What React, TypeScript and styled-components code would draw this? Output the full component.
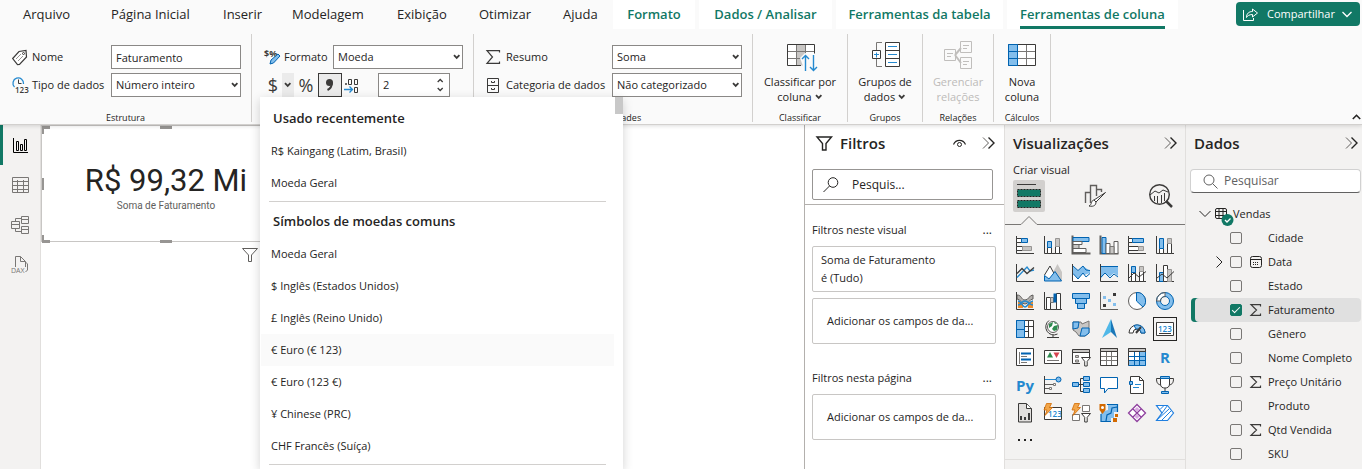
import React from 'react';
import styled, { createGlobalStyle, css } from 'styled-components';

const green = '#117865';
const ink = '#252423';
const dark = '#3b3a39';
const blue = '#0063b1';
const sky = '#83beec';
const mid = '#2489cf';
const gray = '#c8c6c4';
const steel = '#797775';

const GlobalStyle = createGlobalStyle`
  *, *::before, *::after { box-sizing: border-box; }
  body { margin: 0; background: #fff; }
  body, button, input, select {
    font-family: "Open Sans", "Noto Sans", sans-serif;
    font-size: 11px;
    line-height: 16px;
    color: ${ink};
  }
  button { border: 0; padding: 0; background: none; cursor: pointer; }
  h1, h2, h3, p, ul { margin: 0; padding: 0; list-style: none; }
  svg { display: block; flex: none; overflow: visible; }
`;

/* ---------- shared pieces ---------- */

const Svg = ({ w = 18, h = w, children, ...rest }: { w?: number; h?: number; children: React.ReactNode } & React.SVGProps<SVGSVGElement>) => (
  <svg width={w} height={h} viewBox={`0 0 ${w} ${h}`} fill="none" aria-hidden="true" {...rest}>
    {children}
  </svg>
);

const SmallChevron = () => (
  <Svg w={8} h={6}><path d="M1 1.2l2.7 2.7 2.7-2.7" stroke={dark} strokeWidth="1.8" /></Svg>
);

const DoubleChevron = () => (
  <Svg w={13} h={12}>
    <path d="M1 .5l5.5 5.5L1 11.500" stroke="#605e5c" />
    <path d="M6.500 .5l5.500 5.500-5.500 5.500" stroke={ink} strokeWidth="1.4" />
  </Svg>
);

const Sigma = ({ size = 12, h = 13 }: { size?: number; h?: number }) => (
  <Svg w={size} h={h}>
    <path d={`M${size - 0.5} 2.500V.6H1l5.500 ${h / 2 - 0.6}L1 ${h - 0.6}h${size - 1.5}v-2`} stroke={dark} strokeWidth="1.2" />
  </Svg>
);

/* ---------- page frame ---------- */

const Page = styled.div`
  display: flex;
  flex-direction: column;
  height: 100vh;
  overflow: hidden;
`;

const Ribbon = styled.header`
  position: relative;
  z-index: 2;
  background: #fafafa;
  border-bottom: 1px solid #d2d0ce;
  box-shadow: 0 1px 4px rgba(0, 0, 0, 0.14);
`;

const TabBar = styled.nav`
  display: flex;
  height: 29px;
  padding-left: 23px;
`;

const Tab = styled.a<{ $width: number }>`
  flex: 0 0 ${(p) => p.$width}px;
  font-size: 13px;
  line-height: 29px;
  color: ${ink};
  text-decoration: none;
  white-space: nowrap;
`;

const ContextTabs = styled.div`
  display: flex;
  gap: 4px;
`;

const ContextTab = styled.a<{ $width: number; $active?: boolean }>`
  display: flex;
  flex: 0 0 ${(p) => p.$width}px;
  justify-content: center;
  background: #fff;
  color: ${green};
  font-size: 13px;
  font-weight: 600;
  line-height: 29px;
  text-decoration: none;
  white-space: nowrap;
  span { border-bottom: ${(p) => (p.$active ? `3px solid ${green}` : '0')}; height: 29px; }
`;

const ShareButton = styled.button`
  display: flex;
  align-items: center;
  flex: none;
  width: 124px;
  height: 24px;
  margin: 2px 2px 0 auto;
  padding: 0 8px 0 7px;
  gap: 9px;
  border-radius: 4px;
  background: ${green};
  color: #fff;
  span { flex: 1; min-width: 0; white-space: nowrap; }
`;

const Groups = styled.div`
  display: flex;
  padding: 5px 0 2px;
`;

const Group = styled.section<{ $width: number }>`
  position: relative;
  display: flex;
  flex: 0 0 ${(p) => p.$width}px;
  flex-direction: column;
  min-width: 0;
  height: 88px;
  border-right: 1px solid #d2d0ce;
`;

const GroupTitle = styled.h2`
  margin-top: auto;
  font-size: 9px;
  font-weight: 400;
  line-height: 8px;
  text-align: center;
`;

const Rows = styled.div`
  display: flex;
  flex-direction: column;
  gap: 4px;
  padding: 11px 10px 0 12px;
`;

const Row = styled.div`
  display: flex;
  align-items: center;
  height: 24px;
`;

const FieldIcon = styled.span<{ $width: number }>`
  flex: 0 0 ${(p) => p.$width}px;
`;

const FieldLabel = styled.label`
  flex: 1;
  min-width: 0;
  white-space: nowrap;
`;

const box = css`
  width: 100%;
  height: 24px;
  padding: 0 4px;
  border: 1px solid #8a8886;
  border-radius: 0;
  background: #fff;
  appearance: none;
`;

const TextField = styled.input`
  ${box}
  flex: none;
  width: 130px;
`;

const SelectBox = styled.span`
  display: grid;
  flex: 0 0 130px;
  align-items: center;
  > * { grid-area: 1 / 1; }
  > svg { justify-self: end; margin-right: 2px; pointer-events: none; }
`;

const NativeSelect = styled.select`${box}`;

const NumberBox = styled.span`
  display: flex;
  width: 72px;
  height: 24px;
  margin-left: 18px;
  border: 1px solid #8a8886;
  background: #fff;
  input { flex: 1; min-width: 0; padding: 0 4px; border: 0; background: none; }
`;

const Steppers = styled.span`
  display: flex;
  flex-direction: column;
  justify-content: space-evenly;
  width: 12px;
`;

const IconButton = styled.button<{ $width: number; $tone?: 'pressed' | 'shaded' }>`
  display: grid;
  place-items: center;
  flex: 0 0 ${(p) => p.$width}px;
  height: 24px;
  color: ${dark};
  font-size: 18px;
  line-height: 24px;
  background: ${(p) => (p.$tone ? '#ebebeb' : 'none')};
  border: ${(p) => (p.$tone === 'pressed' ? `1px solid ${dark}` : '0')};
`;

const BigButton = styled.button`
  display: flex;
  flex-direction: column;
  align-items: center;
  gap: 2px;
  padding-top: 6px;
  line-height: 15px;
  white-space: nowrap;
  &:disabled { color: #bdbbb9; cursor: default; }
  span { display: flex; align-items: center; justify-content: center; gap: 3px; }
`;

const Collapse = styled.button`
  align-self: flex-end;
  margin: 0 1px 2px auto;
`;

/* ---------- currency menu ---------- */

const Menu = styled.div`
  position: absolute;
  top: 63px;
  left: 8px;
  z-index: 5;
  width: 363px;
  height: calc(100vh - 97px);
  padding: 2px 9px 0 0;
  overflow: hidden;
  background: #fff;
  box-shadow: 0 3px 10px rgba(0, 0, 0, 0.18);
`;

const Thumb = styled.span`
  position: absolute;
  top: 0;
  right: 0;
  width: 8px;
  height: 17px;
  background: #c8c8c8;
`;

const MenuSection = styled.section`
  margin-left: 1px;
`;

const MenuTitle = styled.h3`
  padding: 2px 12px 0;
  font-size: 13px;
  font-weight: 600;
  line-height: 34px;
`;

const MenuItem = styled.button<{ $hover?: boolean }>`
  display: block;
  width: 100%;
  height: 32px;
  padding: 0 10px;
  text-align: left;
  background: ${(p) => (p.$hover ? '#fafafa' : 'none')};
`;

const MenuRule = styled.hr`
  height: 1px;
  margin: 2px 8px 0;
  border: 0;
  background: #d2d0ce;
`;

/* ---------- workspace ---------- */

const Workspace = styled.main`
  display: flex;
  flex: 1;
  min-height: 0;
`;

const Rail = styled.nav`
  display: flex;
  flex: 0 0 41px;
  flex-direction: column;
  background: #f3f2f1;
  border-right: 1px solid #e1dfdd;
`;

const RailButton = styled.button<{ $active?: boolean }>`
  display: grid;
  place-items: center;
  height: 40px;
  padding-right: 3px;
  border-left: 3px solid ${(p) => (p.$active ? green : 'transparent')};
`;

const Canvas = styled.section`
  flex: 1;
  min-width: 0;
  background: #fff;
`;

const CardVisual = styled.article`
  position: relative;
  display: flex;
  flex-direction: column;
  align-items: center;
  width: 250px;
  height: 117px;
  padding-top: 36px;
  border: 1px solid #c8c6c4;
`;

const Handle = styled.span<{ $x: 'start' | 'mid'; $y: 'top' | 'mid' | 'bottom' }>`
  position: absolute;
  ${(p) => (p.$x === 'start' ? 'left: 0;' : 'left: calc(50% - 6px);')}
  ${(p) => (p.$y === 'top' ? 'top: 0;' : p.$y === 'bottom' ? 'bottom: -2px;' : 'top: calc(50% - 6px);')}
  width: ${(p) => (p.$y === 'mid' ? 2 : p.$x === 'mid' ? 12 : 8)}px;
  height: ${(p) => (p.$y === 'mid' ? 12 : p.$x === 'mid' ? 3 : 8)}px;
  ${(p) =>
    p.$x === 'start' && p.$y !== 'mid'
      ? `border-left: 2px solid #979593; border-${p.$y}: 3px solid #979593;`
      : 'background: #979593;'}
`;

const CardValue = styled.p`
  font-family: Roboto, sans-serif;
  font-size: 31px;
  line-height: 38px;
  white-space: nowrap;
`;

const CardCaption = styled.p`
  font-family: Roboto, sans-serif;
  font-size: 10px;
  line-height: 12px;
  color: #605e5c;
`;

const VisualHeader = styled.div`
  display: flex;
  justify-content: flex-end;
  width: 250px;
  padding: 6px 33px 0 0;
`;

const Pane = styled.aside<{ $width: number; $plain?: boolean }>`
  display: flex;
  flex: 0 0 ${(p) => p.$width}px;
  flex-direction: column;
  min-width: 0;
  overflow: hidden;
  background: ${(p) => (p.$plain ? '#fff' : '#f3f2f1')};
  border-left: 1px solid ${(p) => (p.$plain ? '#b3b0ad' : '#e1dfdd')};
  > * { flex: none; }
`;

const PaneHeader = styled.header<{ $left: number; $right: number }>`
  display: flex;
  align-items: center;
  height: 36px;
  padding: 0 ${(p) => p.$right}px 0 ${(p) => p.$left}px;
  gap: 8px;
`;

const PaneTitle = styled.h2`
  flex: 1;
  font-size: 15px;
  font-weight: 600;
  line-height: 24px;
  white-space: nowrap;
`;

const FilterSearch = styled.label`
  display: flex;
  align-items: center;
  height: 31px;
  margin: 8px 11px 4px 7px;
  padding: 0 10px;
  gap: 14px;
  border: 1px solid #979593;
  border-radius: 2px;
  input { flex: 1; min-width: 0; padding: 0; border: 0; font-size: 12px; background: none; }
  input::placeholder { color: ${ink}; opacity: 1; }
`;

const FilterList = styled.div`
  border-top: 1px solid #b3b0ad;
  padding: 0 8px 0 7px;
`;

const FilterHeading = styled.div`
  display: flex;
  align-items: center;
  justify-content: space-between;
  height: 32px;
  margin-top: 9px;
  padding-right: 4px;
  & ~ & { margin-top: 18px; }
  h3 { font-size: 11px; font-weight: 400; white-space: nowrap; }
  button { font-size: 12px; }
`;

const FilterCard = styled.div`
  height: 46px;
  margin-bottom: 6px;
  padding: 4px 8px;
  border: 1px solid #c8c6c4;
  border-radius: 2px;
  line-height: 18px;
`;

const DropZone = styled.div`
  height: 46px;
  padding: 0 14px;
  border: 1px solid #c8c6c4;
  border-radius: 2px;
  line-height: 44px;
  white-space: nowrap;
`;

const BuildArea = styled.div`
  height: 299px;
  border-bottom: 1px solid #e1dfdd;
  h3 { padding-left: 8px; font-size: 11px; font-weight: 400; line-height: 18px; }
`;

const BuildTabs = styled.div`
  display: flex;
  justify-content: space-between;
  padding: 1px 8px 0;
`;

const BuildTab = styled.button<{ $active?: boolean }>`
  display: grid;
  place-items: center;
  width: 32px;
  height: 32px;
  border-radius: 2px;
  background: ${(p) => (p.$active ? '#d2d0ce' : 'none')};
`;

const TabPointer = styled.div`
  display: flex;
  height: 13px;
  &::after { content: ''; flex: 1; border-bottom: 1px solid ${steel}; }
`;

const VisualGrid = styled.div`
  display: grid;
  grid-template-columns: repeat(6, 28px);
  grid-auto-rows: 28px;
  padding: 6px 0 0 6px;
`;

const VisualButton = styled.button<{ $active?: boolean }>`
  display: grid;
  place-items: center;
  width: 24px;
  height: 24px;
  margin: 2px;
  border: 1px solid ${(p) => (p.$active ? ink : 'transparent')};
  color: ${mid};
  font-size: 15px;
  font-weight: 700;
  line-height: 18px;
`;

const DataSearch = styled.label`
  display: flex;
  align-items: center;
  height: 24px;
  margin: 8px 1px 0 4px;
  padding-left: 12px;
  gap: 6px;
  border: 1px solid #d1d1d1;
  border-bottom-color: #616161;
  border-radius: 4px;
  background: #fff;
  input { flex: 1; min-width: 0; padding: 0; border: 0; font-size: 12px; background: none; }
  input::placeholder { color: #616161; opacity: 1; }
`;

const TableNode = styled.div`
  display: flex;
  align-items: center;
  height: 24px;
  margin-top: 9px;
  padding-left: 13px;
  gap: 4px;
`;

const FieldRow = styled.li<{ $selected?: boolean }>`
  display: grid;
  grid-template-columns: 20px 20px 18px 1fr;
  align-items: center;
  height: 24px;
  margin: 0 1px 0 5px;
  padding-left: 19px;
  border-radius: 4px;
  white-space: nowrap;
  ${(p) => p.$selected && `background: #e0e0e0; box-shadow: inset 4px 0 ${green};`}
`;

const Check = styled.input`
  display: grid;
  place-items: center;
  width: 12px;
  height: 12px;
  margin: 0;
  appearance: none;
  border: 1px solid #797775;
  border-radius: 2px;
  &:checked { background: ${green}; border-color: ${green}; }
  &:checked::after {
    content: '';
    width: 8px;
    height: 4px;
    margin-bottom: 3px;
    border: solid #fff;
    border-width: 0 0 1px 1px;
    transform: rotate(-45deg);
  }
`;

/* ---------- visual gallery drawings ---------- */

const axis = <path d="M.5 0v17.500H18" stroke={dark} />;
const bolt = <path d="M2.500-.5h5l-2 4h3l-7.500 8 2-5.500h-3z" fill="#f2a64a" stroke="#d26900" strokeWidth=".8" />;
const smallFunnel = <path d="M9.500 9.500h9l-3.300 3.800v4.700h-2.500v-4.700z" fill="#fff" stroke={dark} />;

type Visual = { name: string; art: React.ReactNode };

const visuals: Visual[] = [
  { name: 'Barras empilhadas', art: <>{axis}<path d="M.5 2.500h5v4h-5zM.5 10.500h6v4h-6z" fill="#fff" stroke={dark} /><path d="M5.500 2.500h6v4h-6z" fill={sky} stroke={blue} /><path d="M6.500 10.500h9v4h-9z" fill={gray} stroke="#979593" /></> },
  { name: 'Colunas empilhadas', art: <>{axis}<path d="M3.500 11.500h4v6h-4zM11.500 10.500h4v7h-4z" fill="#fff" stroke={dark} /><path d="M3.500 5.500h4v6h-4z" fill={sky} stroke={blue} /><path d="M11.500 2.500h4v8h-4z" fill={gray} stroke="#979593" /></> },
  { name: 'Barras clusterizado', art: <><path d="M.5-.5v18H18.500" stroke="#605e5c" strokeWidth="2" /><path d="M1 1.500h16v4H1z" fill={sky} stroke={blue} /><path d="M1 5.500h9v3H1zM1 12.500h13v4H1z" fill="#fff" stroke="#605e5c" /><path d="M1 8.500h6v4H1z" fill={gray} stroke="#605e5c" /></> },
  { name: 'Colunas clusterizado', art: <><path d="M.5-.5v18H18.500" stroke="#605e5c" strokeWidth="2" /><path d="M2 1.500h4v16H2z" fill={sky} stroke={blue} /><path d="M6 7.500h4v10H6zM14 5.500h4v12h-4z" fill="#fff" stroke="#605e5c" /><path d="M10 10.500h4v7h-4z" fill={gray} stroke="#797775" /></> },
  { name: 'Barras 100%', art: <>{axis}<path d="M.5 2.500h4v4h-4zM.5 10.500h10v4H.5z" fill="#fff" stroke={dark} /><path d="M4.500 2.500h11v4h-11z" fill={sky} stroke={blue} /><path d="M10.500 10.500h5v4h-5z" fill={gray} stroke="#979593" /></> },
  { name: 'Colunas 100%', art: <>{axis}<path d="M3.500 12.500h4v5h-4zM11.500 7.500h4v10h-4z" fill="#fff" stroke={dark} /><path d="M3.500 2.500h4v10h-4z" fill={sky} stroke={blue} /><path d="M11.500 2.500h4v5h-4z" fill={gray} stroke="#979593" /></> },
  { name: 'Linhas', art: <>{axis}<path d="M1 13.500l10-10.500 3 4 4-1" stroke={mid} strokeWidth="1.300" /><path d="M1 9.500l5-5 5 5 7-6" stroke={dark} strokeWidth="1.300" /></> },
  { name: 'Área', art: <><path d="M8 10l5.500-10L18 8v9H8z" fill={gray} /><path d="M.5 11L6 2l8 15" stroke={dark} fill="#fff" /><path d="M.5 11.500L5 15l6-7.500L17.500 17H.5z" fill={sky} stroke={blue} /></> },
  { name: 'Área empilhada', art: <><path d="M1 2l5 4.500L11 2l7 5v2l-6 2-5 5-6-6z" fill={sky} /><path d="M1 10l5 5 5-5.500 3 3.500 4-3.500V17H1z" fill="#fff" /><path d="M1 2l5 4.500L11 2l3 4 4 .5M1 9.500l5 5.500 5-6 3 4 4-3.500" stroke={blue} />{axis}</> },
  { name: 'Área 100%', art: <><path d="M1 2.500h17V12l-4-3-4 3.500-5-3-4 5z" fill={sky} /><path d="M18 2.500H1M1 13l4-4 5 5 4-4 4 3" stroke={blue} />{axis}</> },
  { name: 'Linha e colunas empilhadas', art: <>{axis}<path d="M3.500 7.500h4v10h-4zM11.500 7.500h4v10h-4z" fill="#fff" stroke={dark} /><path d="M3.500 2.500h4v6h-4z" fill={sky} stroke={blue} /><path d="M11.500 2.500h4v5h-4z" fill={gray} stroke="#979593" /><path d="M1 14l5-5 5 4 7-5.500" stroke={dark} /></> },
  { name: 'Linha e colunas clusterizado', art: <>{axis}<path d="M3.500 8.500h4v9h-4z" fill={sky} stroke={blue} /><path d="M7.500 1.500h4v16h-4z" fill="#fff" stroke={dark} /><path d="M11.500 5.500h4v12h-4z" fill={gray} stroke="#979593" /><path d="M1 14l5-4 5 4 7-6.500" stroke={dark} /></> },
  { name: 'Faixa de opções', art: <><path d="M2 10h5v6H2zM12 10h5v6h-5z" fill="#f28c28" /><path d="M1 3c5 0 4 5 8 5s4-5 8-5v4c-4 0-4 5-8 5S5 7 1 7z" fill="#b3b0ad" stroke="#605e5c" /><path d="M2 13c4 0 3-4 7-4s3 4 8 4M2 9c4 0 4 6 7 6s4-6 8-6" stroke={mid} strokeWidth="1.600" />{axis}</> },
  { name: 'Cascata', art: <>{axis}<path d="M2.500 5.500h4v12h-4zM12.500 1.500h4v16h-4z" fill="#fff" stroke={dark} /><path d="M6.500 5.500h3v5h-3z" fill={gray} stroke="#797775" /><path d="M9.500 1.500h3v9h-3z" fill={blue} /></> },
  { name: 'Funil', art: <><path d="M.5 1.500h17v5H.5zM3.500 6.500h11v5h-11zM5.500 11.500h7v5h-7z" fill={sky} stroke={blue} /></> },
  { name: 'Dispersão', art: <><path d="M.5 0v17.500H18" stroke="#605e5c" /><path d="M13 1h3v3h-3zM3 12h3v3H3z" fill={dark} /><path d="M3 4h3v3H3zM8 7h3v3H8zM13 11h3v3h-3z" fill={sky} /></> },
  { name: 'Pizza', art: <><circle cx="9" cy="9" r="8.500" fill="#fff" stroke="#605e5c" /><path d="M8.500.5A8.500 8.500 0 0115 15L8.500 9z" fill={sky} stroke={blue} /></> },
  { name: 'Rosca', art: <><circle cx="9" cy="9" r="6.500" stroke={sky} strokeWidth="4" /><path d="M9 2.500A6.500 6.500 0 002.500 9" stroke="#fff" strokeWidth="4" /><circle cx="9" cy="9" r="8.500" stroke={blue} /><circle cx="9" cy="9" r="4.500" stroke={blue} /><path d="M9 .5A8.500 8.500 0 00.5 9h4A4.500 4.500 0 019 4.500z" stroke="#605e5c" /></> },
  { name: 'Treemap', art: <><path d="M.5.5h17v17H.5z" fill="#fff" stroke={dark} /><path d="M8.500 6.500h9M12.500 6.500v11M8.500 11.500h4M12.500 .5v6" stroke={dark} /><path d="M.5.5h8v9h-8zM.5 9.500h8v8h-8z" fill={sky} stroke={blue} /></> },
  { name: 'Mapa', art: <><circle cx="9" cy="7" r="5.500" fill="#fff" stroke="#605e5c" /><path d="M5 4l4-2-1 4-3 2zM10 6l4-1-1 5-3 1-2-2zM10 2l3 1-2 1z" fill="#2e8b4f" /><path d="M5 .5a8 8 0 008.500 13.500M9 15v2M3 17.500h12" stroke={dark} /></> },
  { name: 'Mapa coroplético', art: <><path d="M1 2h8l1 2 7-3v12l-4 3H7l-3-4-3-2z" fill={gray} stroke="#797775" /><path d="M1 2h6l-1 6-5 1zM10 8h7v5l-4 3H8z" fill={sky} stroke={blue} /></> },
  { name: 'Azure Mapas', art: <><path d="M11-1L2 18l9-6z" fill="#50b8e8" /><path d="M11-1l6 19-6-6z" fill="#1a77b8" /></> },
  { name: 'Medidor', art: <><path d="M1 13a8 8 0 0116 0h-4a4 4 0 00-8 0z" fill="#fff" stroke={dark} /><path d="M6 5.500A8 8 0 0117 13h-4a4 4 0 00-5-4z" fill={sky} stroke={blue} /><path d="M8 13l5-6" stroke={dark} strokeWidth="2" /></> },
  { name: 'Cartão', art: <><path d="M.5 2.500h17v13H.5z" fill="#fff" stroke={dark} /><text x="2" y="12" fontSize="8" fontWeight="600" fill={mid}>123</text><path d="M3 13.500h12" stroke={dark} /></> },
  { name: 'Cartão de várias linhas', art: <><path d="M.5.5h17v17H.5z" fill="#fff" stroke={dark} /><path d="M5 5.500h10M5 11.500h10" stroke={blue} strokeWidth="2" /><path d="M5 8.500h6M5 14.500h6M3.500 4v12" stroke="#797775" /></> },
  { name: 'KPI', art: <><path d="M.5 2.500h17v13H.5z" fill="#fff" stroke={dark} /><path d="M3 9.500l3-5.500 3 5.500z" fill="#2e8b4f" /><path d="M9.500 4.500h6l-3 5.500z" fill="#d64550" /><path d="M3 12.500h12" stroke="#797775" /></> },
  { name: 'Segmentação de dados', art: <><path d="M.5 15.500V2h17v7M.5 15.500H8" fill="#fff" stroke={dark} /><path d="M.5 1.500h17v3H.5z" fill={gray} stroke={dark} /><path d="M3.500 7.500h3v2h-3zM3.500 12h3v2h-3z" fill={gray} stroke="#797775" />{smallFunnel}</> },
  { name: 'Tabela', art: <><path d="M.5.5h17v17H.5z" fill="#fff" stroke={dark} /><path d="M.5.5h17v3H.5z" fill={gray} stroke={dark} /><path d="M6.500 4v13M11.500 4v13M1 8.500h16M1 12.500h16" stroke="#797775" /></> },
  { name: 'Matriz', art: <><path d="M.5.5h17v17H.5z" fill="#fff" stroke={dark} /><path d="M.5.5h17v3H.5z" fill={gray} stroke={dark} /><path d="M11.500 4h6v13.500H1v-5h10.500z" fill={sky} /><path d="M6.500 4v13M11.500 4v13M1 8.500h16M1 12.500h16M17.500 4v13.500H.5" stroke={blue} /></> },
  { name: 'Visual do R', art: 'R' },
  { name: 'Visual do Python', art: 'Py' },
  { name: 'Influenciadores', art: <><path d="M.5 0v17.500H18" stroke={dark} /><path d="M1 8.500h8M1 12.500h4" stroke="#605e5c" /><path d="M1 3.500h12" stroke={mid} /><circle cx="14.500" cy="3.500" r="2.500" fill={sky} stroke={blue} /><path d="M9.500 7.500h2v2h-2zM5.500 11.500h2v2h-2z" fill="#fff" stroke="#797775" /></> },
  { name: 'Árvore hierárquica', art: <><path d="M6 8.500h5M11 2.500H8.500v13H11" stroke={dark} /><path d="M.5 6.500h6v4h-6zM11.500.5h6v4h-6zM11.500 6.500h6v4h-6zM11.500 12.500h6v4h-6z" fill={sky} stroke={blue} /></> },
  { name: 'P e R', art: <path d="M.5 1.500h17v11H8L4.500 17v-4.500h-4z" fill="#fff" stroke={blue} /> },
  { name: 'Narrativa', art: <><path d="M2.500.5h9l4 4v13h-13z" fill="#fff" stroke={dark} /><path d="M11.500.5v4h4" stroke={dark} /><path d="M1.500 5.500h3v3h-3z" fill={sky} stroke={blue} /><path d="M7 8.500h6M5 11.500h6" stroke={mid} /></> },
  { name: 'Metas', art: <><path d="M4.500 2.500h-4c0 4 1 6 4.500 6.500M13.500 2.500h4c0 4-1 6-4.500 6.500" stroke={dark} /><path d="M4.500 1.500h9V8c0 3-2 4-4.500 4S4.500 11 4.500 8zM9 12v3" fill="#fff" stroke={dark} /><path d="M4.500.5h9v2h-9zM5.500 15.500h7v2h-7z" fill={sky} stroke={blue} /></> },
  { name: 'Relatório paginado', art: <><path d="M2.500-.5h8l5 5v13.500h-13z" fill="#e1dfdd" stroke={dark} /><path d="M10.500 0v4.500h5" fill="#fff" stroke={dark} /><path d="M4 12h2v4H4zM8 13h2v3H8zM12 9h2v7h-2z" fill={dark} /></> },
  { name: 'Cartão novo', art: <><path d="M.5 3.500h17v12H.5z" fill="#fff" stroke={dark} /><text x="4" y="13" fontSize="8" fontWeight="600" fill={mid}>123</text>{bolt}</> },
  { name: 'Segmentação nova', art: <><path d="M.5 10.500h7v6h-7zM10.500 1.500h7v6h-7z" fill="#fff" stroke="#797775" />{bolt}{smallFunnel}</> },
  { name: 'ArcGIS', art: <><path d="M1 8v9.500h10V14h3V8h3V1H8v5z" fill={sky} /><path d="M17 3l-5 1-1 5-4 2-1 6M1 10v7.500h10M7 .5h10.500V8" stroke={blue} strokeWidth="1.200" /><path d="M-.5 0h6v6l-3 4-3-4zM13 14h4v4h-4zM15 10h3v3h-3z" fill="#d26900" /><circle cx="2.500" cy="3.500" r="1.500" fill="#fff" /></> },
  { name: 'Power Apps', art: <><path d="M9 .5L17.500 9 9 17.500.5 9zM5 5l8 8M13 5l-8 8" fill="#fff" stroke="#8e3f9e" strokeWidth="1.300" /><path d="M9 3l2.300 2.300L9 7.600 6.700 5.300zM9 10.500l2.300 2.300L9 15l-2.300-2.200z" fill="#d8a5e2" /></> },
  { name: 'Power Automate', art: <><path d="M.5 1.500h11L17.500 9l-6 7.500h-11L6 9z" fill="#fff" stroke="#1f7fe0" strokeWidth="1.200" /><path d="M4 5.500l4-4M6 9l5.500-7.500M1 16l12-11M6 16l9-9" stroke="#1f7fe0" /></> },
];

/* ---------- content ---------- */

const tabs: [string, number][] = [
  ['Arquivo', 88], ['Página Inicial', 112], ['Inserir', 69], ['Modelagem', 105], ['Exibição', 82], ['Otimizar', 84], ['Ajuda', 50],
];
const contextTabs: [string, number][] = [
  ['Formato', 82], ['Dados / Analisar', 133], ['Ferramentas da tabela', 167], ['Ferramentas de coluna', 171],
];
const recent = ['R$ Kaingang (Latim, Brasil)', 'Moeda Geral'];
const common = ['Moeda Geral', '$ Inglês (Estados Unidos)', '£ Inglês (Reino Unido)', '€ Euro (€ 123)', '€ Euro (123 €)', '¥ Chinese (PRC)', 'CHF Francês (Suíça)'];
const fields: { name: string; kind?: 'sum' | 'date' }[] = [
  { name: 'Cidade' }, { name: 'Data', kind: 'date' }, { name: 'Estado' }, { name: 'Faturamento', kind: 'sum' }, { name: 'Gênero' },
  { name: 'Nome Completo' }, { name: 'Preço Unitário', kind: 'sum' }, { name: 'Produto' }, { name: 'Qtd Vendida', kind: 'sum' }, { name: 'SKU' },
];

const Select = ({ id, value }: { id: string; value: string }) => (
  <SelectBox>
    <NativeSelect id={id} defaultValue={value}><option>{value}</option></NativeSelect>
    <SmallChevron />
  </SelectBox>
);

const RibbonGroups = () => (
  <Groups>
    <Group $width={252}>
      <Rows>
        <Row>
          <FieldIcon $width={20}>
            <Svg w={15} h={15}><path d="M.7 8.500L7 1.500l7-1 .5 6.500-7 7.500-2 .2z" fill="#fff" stroke={dark} strokeWidth="1.200" /><path d="M4 9l5-5M6 11l5-5" stroke="#979593" /><circle cx="11.500" cy="3.500" r="1" stroke={dark} /></Svg>
          </FieldIcon>
          <FieldLabel htmlFor="nome">Nome</FieldLabel>
          <TextField id="nome" defaultValue="Faturamento" />
        </Row>
        <Row>
          <FieldIcon $width={20}>
            <Svg w={16} h={17}><path d="M2.500 10A5.300 5.300 0 1111.500 7" stroke={mid} strokeWidth="1.300" /><path d="M6.500 2.500v4h3" stroke={dark} /><text x="3" y="16" fontSize="8" fontWeight="600" fill={dark}>123</text></Svg>
          </FieldIcon>
          <FieldLabel htmlFor="tipo">Tipo de dados</FieldLabel>
          <Select id="tipo" value="Número inteiro" />
        </Row>
      </Rows>
      <GroupTitle>Estrutura</GroupTitle>
    </Group>

    <Group $width={222}>
      <Rows>
        <Row>
          <FieldIcon $width={20}>
            <Svg w={16} h={16}><text x="0" y="8" fontSize="9" fontWeight="700" fill={dark}>$%</text><path d="M6 15l1-4 7-6 2 2-6.500 7z" fill={sky} stroke={blue} /></Svg>
          </FieldIcon>
          <FieldLabel htmlFor="formato">Formato</FieldLabel>
          <Select id="formato" value="Moeda" />
        </Row>
        <Row>
          <IconButton $width={18} aria-label="Moeda">$</IconButton>
          <IconButton $width={12} $tone="shaded" aria-label="Mais moedas"><SmallChevron /></IconButton>
          <IconButton $width={24} aria-label="Porcentagem">%</IconButton>
          <IconButton $width={24} $tone="pressed" aria-label="Separador de milhar">
            <Svg w={10} h={14}><circle cx="4.500" cy="4.500" r="3.500" fill={dark} /><path d="M7 4.500c0 4-1.500 6-4.500 7.500" stroke={dark} strokeWidth="2" /></Svg>
          </IconButton>
          <IconButton $width={18} aria-label="Casas decimais automáticas">
            <Svg w={15} h={15}><path d="M4.500 1.500h3v5h-3zM10.500 1.500h3v5h-3zM10.500 9.500h3v5h-3zM1.500 5.500h1v1h-1z" stroke={dark} /><path d="M0 11.500h8M5.500 8.500l3 3-3 3" stroke={mid} strokeWidth="1.300" /></Svg>
          </IconButton>
          <NumberBox>
            <input aria-label="Casas decimais" defaultValue="2" />
            <Steppers>
              <button aria-label="Aumentar"><Svg w={7} h={5}><path d="M.7 4l2.500-2.500L5.700 4" stroke={dark} strokeWidth="1.300" /></Svg></button>
              <button aria-label="Diminuir"><Svg w={7} h={5}><path d="M.7 1l2.500 2.500L5.700 1" stroke={dark} strokeWidth="1.300" /></Svg></button>
            </Steppers>
          </NumberBox>
        </Row>
      </Rows>
      <Menu>
        <Thumb />
        <MenuSection>
          <MenuTitle>Usado recentemente</MenuTitle>
          {recent.map((label) => <MenuItem key={label}>{label}</MenuItem>)}
          <MenuRule />
        </MenuSection>
        <MenuSection>
          <MenuTitle>Símbolos de moedas comuns</MenuTitle>
          {common.map((label, i) => <MenuItem key={label} $hover={i === 3}>{label}</MenuItem>)}
          <MenuRule />
        </MenuSection>
      </Menu>
    </Group>

    <Group $width={279}>
      <Rows>
        <Row>
          <FieldIcon $width={20}><Sigma size={14} h={14} /></FieldIcon>
          <FieldLabel htmlFor="resumo">Resumo</FieldLabel>
          <Select id="resumo" value="Soma" />
        </Row>
        <Row>
          <FieldIcon $width={20}>
            <Svg w={14} h={15}><path d="M1.500.5h11v14h-11zM1.500 7.500h11" stroke={dark} /><path d="M5.500 3v1.500h3V3M5.500 10v1.500h3V10" stroke={dark} /></Svg>
          </FieldIcon>
          <FieldLabel htmlFor="categoria">Categoria de dados</FieldLabel>
          <Select id="categoria" value="Não categorizado" />
        </Row>
      </Rows>
      <GroupTitle>Propriedades</GroupTitle>
    </Group>

    <Group $width={95}>
      <BigButton>
        <Svg w={32} h={32}>
          <path d="M3.500 4.500h27v21h-27z" fill="#fff" /><path d="M12.500 4.500h9v21h-9z" fill={gray} />
          <path d="M12.500 5v20M21.500 5v9M4 11.500h26M4 18.500h14" stroke="#797775" /><path d="M17 25.500H3.500v-21h27v9" stroke={dark} />
          <path d="M16 18l5-5 9 2v11H19z" fill="#fafafa" />
          <path d="M21.500 31V16M18 19l3.500-3.500L25 19M29.500 15v15M26 27l3.500 3.500L33 27" stroke={mid} strokeWidth="1.400" />
        </Svg>
        <div>Classificar por<span>coluna<SmallChevron /></span></div>
      </BigButton>
      <GroupTitle>Classificar</GroupTitle>
    </Group>

    <Group $width={75}>
      <BigButton>
        <Svg w={32} h={32}>
          <path d="M13 2.500H7.500v8M7.500 18v8.500H13" stroke="#797775" /><path d="M3.500 10.500h8v8h-8z" fill="#fff" stroke={dark} />
          <path d="M7.500 12.500v5M5 14.500h5" stroke={mid} /><path d="M16.500 2.500h14v24h-14zM16.500 10.500h14M16.500 18.500h14" fill="#fff" stroke={dark} />
          <path d="M19 6.500h9M19 14.500h9M19 22.500h9" stroke={mid} />
        </Svg>
        <div>Grupos de<span>dados<SmallChevron /></span></div>
      </BigButton>
      <GroupTitle>Grupos</GroupTitle>
    </Group>

    <Group $width={71}>
      <BigButton disabled>
        <Svg w={32} h={32} stroke="#c0bebc">
          <path d="M13 15l6-7M13 15l6 8" strokeWidth="2" /><path d="M2.500 9.500h11v11h-11zM18.500 1.500h11v11h-11zM18.500 17.500h11v11h-11zM5 13.500h6M5 16.500h4M21 5.500h6M21 8.500h4M21 21.500h6M21 24.500h4" />
        </Svg>
        <div>Gerenciar<span>relações</span></div>
      </BigButton>
      <GroupTitle>Relações</GroupTitle>
    </Group>

    <Group $width={57}>
      <BigButton>
        <Svg w={32} h={32}>
          <path d="M2.500 4.500h27v21h-27z" fill="#fff" stroke={dark} /><path d="M20.500 5v20M12 11.500h17M12 18.500h17" stroke="#797775" />
          <path d="M2.500 4.500h9v21h-9zM2.500 11.500h9M2.500 18.500h9" fill={sky} stroke={blue} />
        </Svg>
        <div>Nova<span>coluna</span></div>
      </BigButton>
      <GroupTitle>Cálculos</GroupTitle>
    </Group>

    <Collapse aria-label="Recolher faixa"><Svg w={9} h={6}><path d="M.8 5l3.700-3.700L8.200 5" stroke={ink} strokeWidth="1.600" /></Svg></Collapse>
  </Groups>
);

const RailNav = () => (
  <Rail>
    <RailButton $active aria-label="Relatório">
      <Svg w={15} h={15}><path d="M.5 0v14.500H15" stroke="#000" /><path d="M3.500 3.500h2v9h-2zM7.500 6.500h2v6h-2zM11.500 1.500h2v11h-2z" stroke="#000" /></Svg>
    </RailButton>
    <RailButton aria-label="Tabela">
      <Svg w={17} h={16}><path d="M.5.5h16v15H.5zM.5 4.500h16M.5 8.500h16M.5 12.500h16M5.500 3v12M11.500 3v12" stroke={steel} /></Svg>
    </RailButton>
    <RailButton aria-label="Modelo">
      <Svg w={18} h={18}><path d="M.5 5.500h8v7h-8zM.5 8.500h8M10.500.5h7v7h-7zM10.500 3.500h7M10.500 10.500h7v7h-7zM10.500 13.500h7M4.500 5.500v-3h6M4.500 12.500v3h6" stroke={steel} /></Svg>
    </RailButton>
    <RailButton aria-label="DAX">
      <Svg w={18} h={18}><path d="M4.500 11V.5h5l5 5V11M9.500.5v5h5M14.500 6l2 2v6l-2 2" stroke={steel} /><text x="0" y="17" fontSize="7" fill={steel}>DAX</text></Svg>
    </RailButton>
  </Rail>
);

const FiltersPane = () => (
  <Pane $width={200} $plain>
    <PaneHeader $left={11} $right={9}>
      <Svg w={16} h={15}><path d="M1 1h14.500L10 7.500V14H6.500V7.500z" stroke={ink} strokeWidth="1.400" /></Svg>
      <PaneTitle>Filtros</PaneTitle>
      <button aria-label="Mostrar painel"><Svg w={13} h={9}><path d="M.5 5.500C3 0 10 0 12.500 5.500" stroke={ink} strokeWidth="1.200" /><circle cx="6.500" cy="5.500" r="2" stroke={ink} /></Svg></button>
      <span />
      <button aria-label="Recolher filtros"><DoubleChevron /></button>
    </PaneHeader>
    <FilterSearch>
      <Svg w={15} h={15}><circle cx="10" cy="5.500" r="4.800" stroke={ink} /><path d="M6.500 9L.5 15" stroke={ink} /></Svg>
      <input aria-label="Pesquisar filtros" placeholder="Pesquis..." />
    </FilterSearch>
    <FilterList>
      <FilterHeading><h3>Filtros neste visual</h3><button>...</button></FilterHeading>
      <FilterCard><p>Soma de Faturamento</p><p>é (Tudo)</p></FilterCard>
      <DropZone>Adicionar os campos de da...</DropZone>
      <FilterHeading><h3>Filtros nesta página</h3><button>...</button></FilterHeading>
      <DropZone>Adicionar os campos de da...</DropZone>
      <FilterHeading><h3>Filtros em todas as páginas</h3></FilterHeading>
    </FilterList>
  </Pane>
);

const VisualsPane = () => (
  <Pane $width={181}>
    <PaneHeader $left={8} $right={8}>
      <PaneTitle>Visualizações</PaneTitle>
      <button aria-label="Recolher visualizações"><DoubleChevron /></button>
    </PaneHeader>
    <BuildArea>
      <h3>Criar visual</h3>
      <BuildTabs>
        <BuildTab $active aria-label="Criar visual">
          <Svg w={24} h={24}><path d="M0 .5h19" stroke={dark} /><path d="M.5 5.500h23v7H.5zM.5 16.500h23v7H.5z" fill={green} stroke={ink} strokeDasharray="2 1" /></Svg>
        </BuildTab>
        <BuildTab aria-label="Formatar visual">
          <Svg w={24} h={24}><path d="M2.500 19V8.500h5V19M7.500 18V1.500h6V12M13.500 5.500h5V8" stroke="#605e5c" strokeWidth="1.400" /><path d="M22.500 8.500L13 18l-2-2z" fill="#fff" stroke={dark} /><path d="M11 16c-3 0-2 5-5 6 5 1 7-1 7-4z" fill="#fff" stroke={dark} /></Svg>
        </BuildTab>
        <BuildTab aria-label="Análise">
          <Svg w={26} h={26}><circle cx="11.500" cy="11.500" r="9.800" stroke={dark} strokeWidth="1.400" /><path d="M2 12l5-4 4 2 4-3 5 2" stroke={dark} /><path d="M6.500 18v-5M9.500 20v-7M13.500 20v-8M16.500 18v-8" stroke={dark} /><path d="M18 18l6 6" stroke={dark} strokeWidth="2.500" /></Svg>
        </BuildTab>
      </BuildTabs>
      <TabPointer><Svg w={32} h={13}><path d="M0 12.500h16l8-8 8 8" stroke={steel} /></Svg></TabPointer>
      <VisualGrid>
        {visuals.map(({ name, art }) => (
          <VisualButton key={name} aria-label={name} $active={name === 'Cartão'}>
            {typeof art === 'string' ? art : <Svg>{art}</Svg>}
          </VisualButton>
        ))}
        <VisualButton aria-label="Mais visuais"><Svg><path d="M2 7h2v2H2zM8 7h2v2H8zM14 7h2v2h-2z" fill={ink} /></Svg></VisualButton>
      </VisualGrid>
    </BuildArea>
  </Pane>
);

const DataPane = () => (
  <Pane $width={177}>
    <PaneHeader $left={8} $right={4}>
      <PaneTitle>Dados</PaneTitle>
      <button aria-label="Recolher dados"><DoubleChevron /></button>
    </PaneHeader>
    <DataSearch>
      <Svg w={15} h={15}><circle cx="6" cy="6" r="5" stroke="#616161" /><path d="M9.500 9.500l5 5" stroke="#616161" /></Svg>
      <input aria-label="Pesquisar dados" placeholder="Pesquisar" />
    </DataSearch>
    <TableNode>
      <button aria-label="Recolher tabela"><Svg w={12} h={8}><path d="M.5 1L6 6.500 11.500 1" stroke={ink} /></Svg></button>
      <Svg w={14} h={14}>
        <rect x=".5" y="1.500" width="11" height="10" rx="1.500" stroke={ink} /><path d="M.5 4.500h11M.5 8.500h11M4 1.500v10M8 1.500v10" stroke={ink} />
        <circle cx="12.500" cy="13" r="6" fill={green} /><path d="M10 13l2 2 3.500-3.500" stroke="#fff" strokeWidth="1.300" />
      </Svg>
      <span>Vendas</span>
    </TableNode>
    <ul>
      {fields.map(({ name, kind }) => (
        <FieldRow key={name} $selected={name === 'Faturamento'}>
          {kind === 'date' ? <button aria-label="Expandir Data"><Svg w={14} h={12}><path d="M6.500.5L12 6l-5.500 5.500" stroke={ink} /></Svg></button> : <span />}
          <Check type="checkbox" id={`campo-${name}`} defaultChecked={name === 'Faturamento'} />
          {kind === 'sum' ? <Sigma size={11} h={12} /> : kind === 'date' ? (
            <Svg w={12} h={12}><rect x=".5" y=".5" width="11" height="11" rx="2" stroke={ink} /><path d="M.5 3.500h11" stroke={ink} /><path d="M3 6.500h6M3 8.500h6" stroke={ink} strokeDasharray="1 1" /></Svg>
          ) : <span />}
          <label htmlFor={`campo-${name}`}>{name}</label>
        </FieldRow>
      ))}
    </ul>
  </Pane>
);

export default function App() {
  return (
    <Page>
      <GlobalStyle />
      <Ribbon>
        <TabBar>
          {tabs.map(([label, width]) => <Tab key={label} href="#" $width={width}>{label}</Tab>)}
          <ContextTabs>
            {contextTabs.map(([label, width], i) => (
              <ContextTab key={label} href="#" $width={width} $active={i === 3}><span>{label}</span></ContextTab>
            ))}
          </ContextTabs>
          <ShareButton>
            <Svg w={15} h={13}><path d="M.5 2v10.500h10V10" stroke="#fff" /><path d="M9.500 1l5 4-5 4V6.500C6 6.500 4.500 8 3.500 9.500c0-4 2.500-6 6-6z" stroke="#fff" /></Svg>
            <span>Compartilhar</span>
            <Svg w={10} h={7}><path d="M.5 1L5 5.500 9.500 1" stroke="#fff" strokeWidth="1.300" /></Svg>
          </ShareButton>
        </TabBar>
        <RibbonGroups />
      </Ribbon>
      <Workspace>
        <RailNav />
        <Canvas>
          <CardVisual>
            <Handle $x="start" $y="top" /><Handle $x="mid" $y="top" /><Handle $x="start" $y="mid" />
            <Handle $x="start" $y="bottom" /><Handle $x="mid" $y="bottom" />
            <CardValue>R$ 99,32 Mi</CardValue>
            <CardCaption>Soma de Faturamento</CardCaption>
          </CardVisual>
          <VisualHeader>
            <Svg w={16} h={14}><path d="M.5.5h15L9.500 7v6.500h-3V7z" stroke="#605e5c" /></Svg>
          </VisualHeader>
        </Canvas>
        <FiltersPane />
        <VisualsPane />
        <DataPane />
      </Workspace>
    </Page>
  );
}
